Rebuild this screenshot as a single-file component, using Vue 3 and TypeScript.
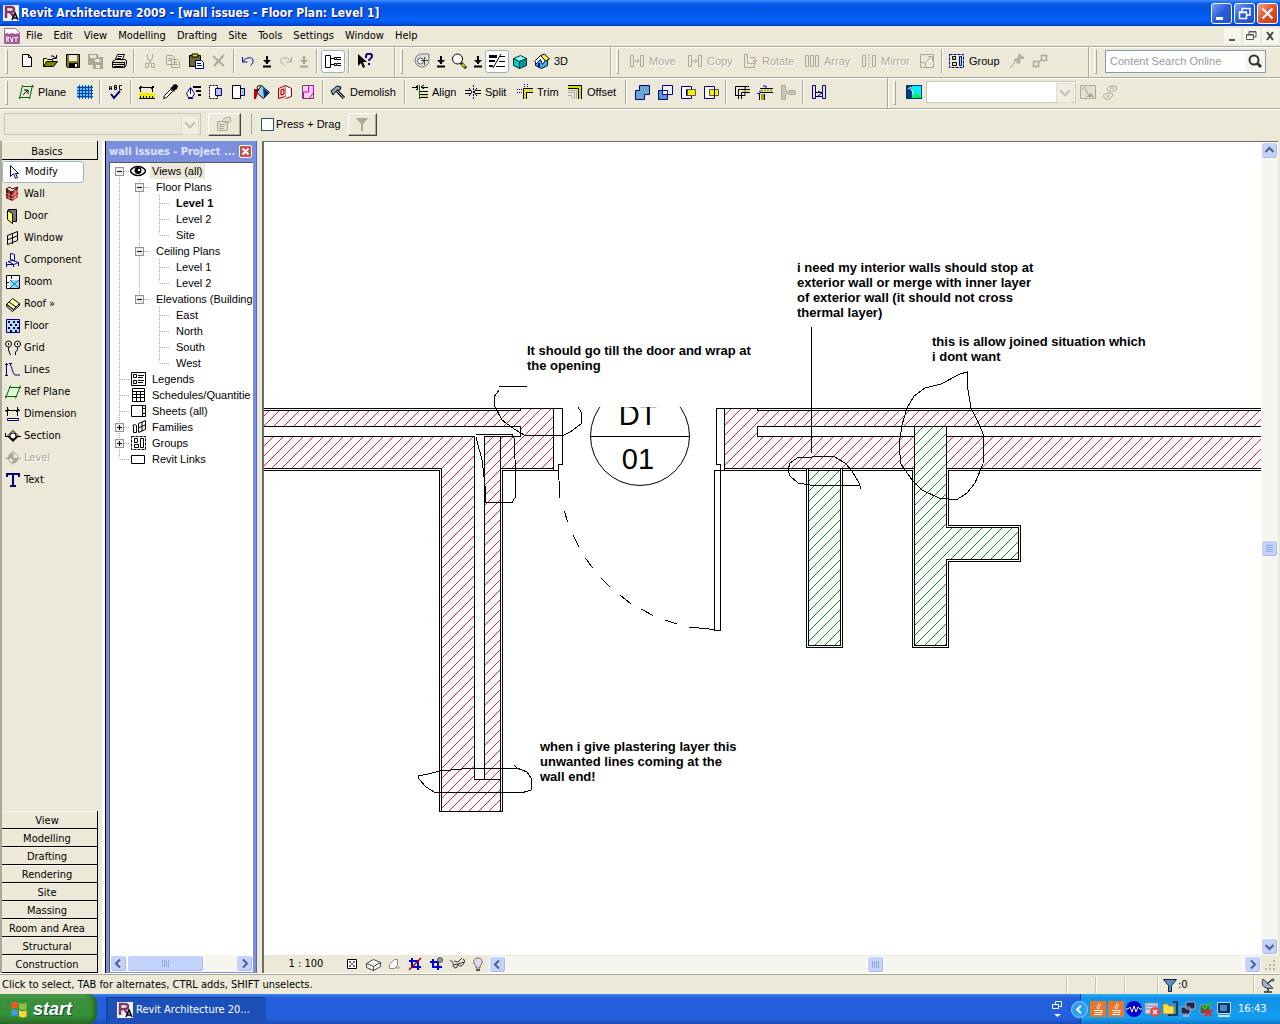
<script setup lang="ts">
interface Tool {
  icon?: string
  label?: string
  name?: string
  w?: number
  off?: boolean
  on?: boolean
  sep?: boolean
}
interface TreeRow {
  text: string
  cells: string[]
  icon?: string
  bold?: boolean
  picked?: boolean
}

const K = 'stroke="#000" fill="none"'
const G = 'stroke="#aca899" fill="none"'
const N = 'stroke="#000080" fill="none"'

const icons: Record<string, string> = {
  fresh: '<path d="M3.5 1.5h6l3 3v9h-9zM9.5 1.5v3h3" stroke="#000" fill="#fff"/>',
  open: '<path d="M1.5 13.5v-8h3l1 1h5v2" stroke="#000" fill="#ffff80"/><path d="M1.5 13.5l3-5h11l-4 5z" stroke="#000" fill="#808000"/><path d="M9 3h2l3 2M14.500 2v3.500h-4" stroke="#000" fill="none"/>',
  save: '<path d="M1.500 1.500h13v13h-12l-1-1z" stroke="#000" fill="#808000"/><path d="M4 2h8v6H4z" fill="#ece9d8"/><path d="M4 10h9v5H4z" fill="#000"/><path d="M10 11h2v3h-2z" fill="#fff"/>',
  central: '<path d="M0 1h10v3h5v12H5v-4H0z" fill="#aca899"/><path d="M2 2h6v3H2zM7 6h6v3H7zM8 12h4v3H8z" fill="#ece9d8"/><path d="M12 5v4M3 8l3 3M13 11l2 3" stroke="#aca899"/>',
  print: '<path d="M4.500 6.500l2-5h7l-2 5M7 3.500h4M6 5.500h4" stroke="#000" fill="#fff"/><path d="M1.500 8.500l3-2h9l2 1v4l-2 3h-12z" stroke="#000" fill="#e0ddc8"/><path d="M2 9.500h11M2 11.500h11M3 13.500h9M13.500 9v5" stroke="#000"/><path d="M8 10h3v1H8z" fill="#cc0"/>',
  cut: '<path d="M5.500 1v4l4 6M10.500 1v4l-4 6" stroke="#aca899" fill="none"/><path d="M3.500 10.500h3v4h-3zM9.500 10.500h3v4h-3z" stroke="#aca899" fill="none"/>',
  copy: '<path d="M1.500 2.500h6l2 2v7h-8zM6.500 6.500h6l2 2v6h-8zM3 5.500h4M3 7.500h3M8 9.500h4M8 11.500h5" stroke="#aca899" fill="none"/>',
  paste: '<path d="M1.500 2.500h11v11h-11z" stroke="#000" fill="#6b6b2e"/><path d="M4 1h6v3H4z" fill="#cc3" stroke="#000"/><path d="M7.500 7.500h6l2 2v6h-8z" stroke="#000080" fill="#fff"/><path d="M9 10.500h4M9 12.500h5" stroke="#000080"/>',
  del: '<path d="M2 3l11 10M13 2L3 13" stroke="#aca899" stroke-width="2"/>',
  undo: '<path d="M2.500 4v5h5M3 8.500c3-5 11-5 10 0c0 2-2 3-2 4" stroke="#0000a0" fill="none"/>',
  redo: '<path d="M13.500 4v5h-5M13 8.500c-3-5-11-5-10 0c0 2 2 3 3 3" stroke="#aca899" fill="none"/>',
  down: '<path d="M8 3v8M4 13.500h8" stroke="#000" stroke-width="2"/><path d="M4 7h8l-4 4z"/>',
  downoff: '<path d="M8 3v8M4 13.500h8" stroke="#aca899" stroke-width="2"/><path d="M4 7h8l-4 4z" fill="#aca899"/>',
  browser: `<path d="M.500 2.500h5v12h-5zM6 5.500h3M6 11.500h3M9.500 4.500h2v2h-2zM9.500 10.500h2v2h-2zM12 4.500h4M12 6.500h4M12 10.500h4M12 12.500h4" ${K}/>`,
  help: '<path d="M1 1v12l3-3 2 5 2-1-2-5h4z"/><path d="M9 5V3c0-3 6-3 6 0c0 3-3 2-3 5M12 10v2" stroke="#000080" stroke-width="2" fill="none"/>',
  wheel: '<path d="M8 1h7v7a7 6.500 0 1 1-7-7z" fill="#ddd" stroke="#777"/><circle cx="6.500" cy="8" r="3" fill="#fff" stroke="#555"/><path d="M10.500 4v8M7 7.500h7" stroke="#444"/>',
  lens: '<circle cx="6.500" cy="6" r="5" fill="#fff" stroke="#000"/><path d="M10 10l5 5" stroke="#000" stroke-width="3"/><path d="M11 11l3 3" stroke="#cc0" stroke-width="2"/>',
  thin: '<path d="M0 2h8v3H0zM0 7h6v2H0zM0 12h4v2H0z"/><path d="M4 15L12 1" stroke="#000"/><path d="M11 3.500h5M10 8.500h6M7 13.500h9" stroke="#000"/>',
  cube: '<path d="M1.500 5.500l6 3v7l-6-3z" fill="#0cc" stroke="#033"/><path d="M7.500 8.500l7-3v7l-7 3z" fill="#099" stroke="#033"/><path d="M1.500 5.500l7-3 6 3-7 3z" fill="#8ff" stroke="#033"/>',
  house: '<path d="M1.500 8v4.500l6 3 6-3V7l-5-5z" fill="#3bd" stroke="#003"/><path d="M.500 8.500L6.500 2.500l5 5-3 4-2-5-4 4z" fill="#fff" stroke="#003"/><path d="M6.500 2.500l4-1.500 5 5-4 2z" fill="#fe3" stroke="#003"/><path d="M4 10h2v4H4z" fill="#00a"/>',
  move: `<path d="M1.500 2.500h3v11h-3zM11.500 2.500h3v11h-3zM5 8h5M8 6l2 2-2 2" ${G}/>`,
  rotate: `<path d="M2.500 1.500h3v9h7v4h-10zM8 4.500h5v5M11 7l2 3 2-3" ${G}/>`,
  array: `<path d="M1.500 2.500h3v11h-3zM6.500 2.500h3v11h-3zM11.500 2.500h3v11h-3z" ${G}/>`,
  mirror: `<path d="M1.500 2.500h3v11h-3zM11.500 2.500h3v11h-3z" ${G}/><path d="M8 1v14" stroke="#aca899" stroke-dasharray="2 1"/>`,
  resize: `<path d="M1.500 1.500h13v13h-13zM1.500 9.500h5v5M7 9l6-6M9 3.500h4.500V8" ${G}/>`,
  group: `<path d="M.500 1.500h14v13H.500z" ${N} stroke-dasharray="3 1"/><path d="M3.500 3.500h3v3h-3z" fill="#8f8" stroke="#000"/><path d="M3.500 9.500h4v3h-4z" fill="#ff6" stroke="#000"/><path d="M10.500 3.500h2v9h-2z" fill="#6ff" stroke="#008"/>`,
  pin: '<path d="M1 15l5-6M10 1l5 4-4 1-1 5-5-4 4-2z" stroke="#aca899" fill="#b9b6a8"/>',
  link: `<path d="M9.500 2.500h5v5h-5zM1.500 8.500h5v5h-5zM7 9l3-3" ${G} stroke-width="1.500"/>`,
  search: '<circle cx="7" cy="7" r="4.500" fill="none" stroke="#333" stroke-width="2"/><path d="M10 10l4 4" stroke="#333" stroke-width="3"/>',
  plane: '<path d="M5 2.500h11M1 13.500h11M4.500 1L1.500 15M14.500 1L11.500 15" stroke="#060"/><path d="M5 11l5-5M6 6h4v4" stroke="#000" fill="none"/>',
  grid: '<path d="M0 2h15v12H0z" fill="#6bb8ff"/><path d="M2.500 1v14M5.500 1v14M8.500 1v14M11.500 1v14M14.500 1v14M0 3.500h16M0 6.500h16M0 9.500h16M0 12.500h16" stroke="#0048a0"/>',
  spell: `<path d="M1.500 6V3l1-1 1 1v3M1 4.500h3M6.500 1.500h2v4h-2zM6 3.500h3M14 1.500h-2.500v4H14" ${K}/><path d="M3 10l3 4 6-7" stroke="#000080" stroke-width="2" fill="none"/>`,
  measure: '<path d="M1.500 2v6M13.500 2v6M0 3.500h15M0 5l3-3M12 5l3-3" stroke="#000"/><path d="M0 9h16v6H0z" fill="#ee0"/><path d="M1.500 12v2M4.500 12v2M7.500 12v2M10.500 12v2M13.500 12v2M0 14.500h16" stroke="#000"/>',
  dropper: '<path d="M1.500 14.500l1-3 6-6 2 2-6 6z" fill="#fff" stroke="#000"/><path d="M8 4l4 4 1-2 2-1 1-3-2-2-3 1-1 2z"/>',
  brush: '<path d="M1.500 9.500l4-6 4 6-2 4h-4z" fill="#fff" stroke="#000080"/><path d="M5.500 4v6M3 14.500h5" stroke="#000080"/><path d="M8 3h8M11 7h5M13 11h3" stroke="#000" stroke-width="2"/>',
  joinA: '<path d="M1.500 1.500h8v13h-8z" stroke="#000" fill="#fff" stroke-dasharray="2 1"/><path d="M7.500 4.500h6v7h-6z" stroke="#000080" fill="#b8c4e8"/>',
  joinB: '<path d="M7.500 4.500h6v7h-6z" stroke="#000080" fill="#b8c4e8"/><path d="M1.500 1.500h8v13h-8z" stroke="#000" fill="#fff"/>',
  bucket: '<path d="M7.500 1.500l8 7-6 6-7-6z" fill="#9cf" stroke="#000"/><path d="M9 4l6 5-5 5z" fill="#036"/><path d="M0 5h4v3l-2 7H0z" fill="#b00"/><path d="M7 2c-4-2-5 3-2 5" stroke="#000" fill="none"/>',
  face: '<path d="M1.500 4.500l7-3v11l-7 2z" fill="#fcc" stroke="#900"/><path d="M8.500 1.500l6 3v8l-6 2" fill="#fff" stroke="#900"/><path d="M4 6l3-1v5l-3 1z" fill="none" stroke="#900"/>',
  splitf: '<path d="M2.500 1.500h11v13h-11z" fill="#fce" stroke="#555"/><path d="M8.500 1v7h-5v7M13.500 1v14" stroke="#c0c" fill="none"/><path d="M9 15l5-7" stroke="#555"/>',
  hammer: '<path d="M1 7l6-5 4 1-1 3h-3l-4 5z" fill="#8ac" stroke="#000"/><path d="M7 7l7 7" stroke="#000" stroke-width="3"/><path d="M7 7l7 7" stroke="#ccc"/>',
  align: '<path d="M0 3.500h6M10 3.500h6M5.500 1v5M4 2l2 2-2 2M12 1l-3 2 3 2" stroke="#000" fill="none"/><path d="M7.500 1v14" stroke="#060"/><path d="M8 7.500h8M8 10.500h8M8 13.500h8" stroke="#000"/><path d="M9 12h7" stroke="#cc0"/>',
  split: '<path d="M0 6.500h6M10 6.500h6M0 9.500h6M10 9.500h6M4 4l3 4-3 4M12 4L9 8l3 4" stroke="#000" fill="none"/><path d="M8.500 1v14" stroke="#00a" stroke-dasharray="2 1"/>',
  trim: '<path d="M0 5.500h6M7.500 0v4M10.500 0v4M0 8.500h5" stroke="#00a" stroke-dasharray="1 1"/><path d="M6.500 15V4.500H16M9.500 15V8.500H16" stroke="#000" fill="none"/><path d="M8 15V6.500h8" stroke="#dd0" stroke-width="2" fill="none"/>',
  offset: '<path d="M1 1.500h13.500V15" stroke="#000" fill="none"/><path d="M1 3h12v12" stroke="#dd0" stroke-width="2" fill="none"/><path d="M1 4.500h10.500V15" stroke="#000" fill="none"/><path d="M1 8.500h6.500V15M1 11.500h4V15M1 6.500h8.500V15" stroke="#aaa" fill="none"/>',
  boolA: '<path d="M5.500 1.500h10v9h-5v5h-9v-9h4z" fill="#6aa7d0" stroke="#000080"/>',
  boolB: '<path d="M1.500 6.500h9v9h-9z" fill="#5599cc" stroke="#000080"/><path d="M5.500 1.500h10v9h-10z" fill="#eef" stroke="#000080"/><path d="M5.500 6.500h5v4h-5z" fill="#fff" stroke="#000080"/>',
  boolC: '<path d="M1.500 2.500h10v3h-5v6h5v3h-10z" fill="#fff" stroke="#000080"/><path d="M7.500 5.500h8v6h-8z" fill="#fe0" stroke="#555"/>',
  boolD: '<path d="M1.500 2.500h10v12h-10z" fill="#fff" stroke="#000080"/><path d="M6.500 5.500h9v6h-9z" fill="#fe0" stroke="#555"/><path d="M11.500 5v7" stroke="#000080"/>',
  wallj: `<path d="M1.500 12V2.500H15M4.500 15V5.500H16M7.500 15V8.500H16M1.500 11.500H11V2" ${K}/><path d="M8 7h6" stroke="#cc0"/>`,
  beam: '<path d="M3 4.500h13M3 8.500h13M2.500 10v6M7.500 10v6" stroke="#000"/><path d="M4 6.500h12" stroke="#aa0" stroke-width="2" stroke-dasharray="2 1"/><path d="M0 9.500h3v-3M6 2h3v3" stroke="#00c" fill="none"/><path d="M4 10h3v6H4z" fill="#aa0"/>',
  joinoff: '<path d="M1.500 1.500h4v4l3 3-3 3v4h-4zM9 6.500h6v4H9z" fill="#c9c6b6" stroke="#aca899"/>',
  opening: `<path d="M1.500 1.500h3v13h-3zM11.500 1.500h3v13h-3zM5 8.500h6M5 12.500h6M7 7l4 2-4 3" ${N}/>`,
  option: '<path d="M0 1h16v14H0z" fill="#003a80"/><path d="M6 2h9v12H6z" fill="#0ef"/><path d="M2 5l3-2v3l3 2-2 2" stroke="#fff" fill="none"/><path d="M6 14l4-5 3 2 2 3z" fill="#0e3"/>',
  optoff: '<path d="M.500 1.500h15v13H.500z" fill="#e3e0cf" stroke="#aca899"/><path d="M6 13l4-4 2 1 2 3z" fill="#aca899"/><path d="M2 5l3-2v3l3 2-2 2" stroke="#aca899" fill="none"/>',
  hands: '<path d="M5 5l3-3h6l1 3-4 2H7zM1 12l3-3h5l2 2-3 4H3zM8 4h4M4 12h4" fill="none" stroke="#aca899"/>',
  props: '<path d="M1.500 5.500h10v9h-10zM3 8.500h6M3 10.500h5M3 12.500h5M6 5l3-3 5-1 1 4-4 2z" fill="#e3e0cf" stroke="#aca899"/>',
  funnel: '<path d="M2 2h12l-5 6v7H7V8z" fill="#aca899"/>',
  modify: '<path d="M4.500 1.500v11l3-3 2 5 2-1-2-4h3z" fill="#fff" stroke="#000080"/>',
  wall: '<path d="M1 3l6 3v9l-6-3z" fill="#700"/><path d="M7 6l6-5v10l-6 4z" fill="#b33"/><path d="M1 3l4-2 2 2 6-2-6 5z" fill="#fff" stroke="#300"/><path d="M1 7l6 3 6-5M1 10l6 3 6-4M4 5v8M10 4v9" stroke="#fff" fill="none" opacity=".5"/>',
  door: '<path d="M3.500 1.500h8v12h-4z" fill="#777" stroke="#000"/><path d="M2.500 2.500l5 3v10l-5-4z" fill="#ff6" stroke="#000"/>',
  window: `<path d="M2.500 5.500l10-4v9l-10 4zM7.500 3v11M2 10l10-4" ${K}/>`,
  component: '<path d="M5.500 1.500l4 1v6l-4-1zM3 9.500l5-1 5 2-4 2z" fill="#fff" stroke="#000080"/><path d="M1.500 10v5M8.500 12v3M13.500 10v4M1 12.500h8" stroke="#000080"/>',
  room: '<path d="M1.500 1.500h13v13h-13z" fill="#fff" stroke="#000"/><path d="M5 6h9v8H5z" fill="#9df"/><path d="M5 6l9 8M14 6l-9 8" stroke="#06a"/><path d="M6.500 1v4M1 8.500h3" stroke="#000"/>',
  roof: '<path d="M1.500 8.500l6-6 7 5-6 6z" fill="#ff9" stroke="#000"/><path d="M1.500 8.500v2l6 5 7-6V7M4 6l7 5M8 13.500l-6-5" stroke="#000" fill="none"/>',
  floor: '<path d="M1 1h14v14H1z" fill="#bdf"/><path d="M1.500 1.500h13v13h-13z" stroke="#008" fill="none"/><path d="M3 3h2v2H3zM8 3h2v2H8zM12 3h2v2h-2zM5 6h2v2H5zM10 6h2v2h-2zM3 9h2v2H3zM8 9h2v2H8zM12 9h2v2h-2zM5 12h2v2H5zM10 12h2v2h-2z" fill="#003"/>',
  gridline: `<circle cx="3.500" cy="4" r="3" ${K}/><circle cx="12.500" cy="4" r="3" ${K}/><path d="M3.500 3v2M12.500 3v2M3.500 7v3l2 5M12.500 7v3l-2 2v3" ${K}/>`,
  lines: '<path d="M1.500 1v13M0 13.500h3M0 2.500h3M5 2c2 2 2 9 5 11h5M4 1.500h3" stroke="#000080" fill="none"/>',
  refplane: '<path d="M5 3.500h10l-4 9H1z" fill="#dfd"/><path d="M4 3.500h12M0 12.500h12M5.500 1.500l-5 13M15.500 1.500l-5 13" stroke="#060"/>',
  dimension: '<path d="M2.500 1v9M12.500 1v9M0 4.500h15M1 6l3-3M11 6l3-3" stroke="#000"/><path d="M2.500 12.500h11v2h-11z" fill="#fff" stroke="#000080"/>',
  section: '<path d="M0 8.500h3M13 8.500h3M.500 5v3M2 8.500l6-6 6 6z" stroke="#000" fill="none"/><path d="M3 9l5 5 5-5z" fill="#000"/><circle cx="8" cy="8" r="3" fill="#fff" stroke="#000"/>',
  level: '<path d="M0 8.500h16M8 1v14" stroke="#aca899"/><path d="M8 3a5 5 0 0 0-5 5h5zM8 13a5 5 0 0 0 5-5H8z" fill="#aca899"/><circle cx="8" cy="8" r="5" fill="none" stroke="#aca899"/>',
  text: '<path d="M2 5V2h12v3M8 2v12M5 14h6" stroke="#000080" stroke-width="2" fill="none"/>',
  eye: '<path d="M0 8c4-6 12-6 16 0c-4 6-12 6-16 0z" fill="#fff" stroke="#000" stroke-width="1.500"/><circle cx="8" cy="7.500" r="3.500"/><path d="M8 6h2v2H8z" fill="#fff"/>',
  legends: `<path d="M1.500 1.500h14v13h-14zM3.500 3.500h3v3h-3zM3.500 9.500h3v3h-3zM8 4.500h6M8 6.500h5M8 9.500h6M8 11.500h5" ${K}/>`,
  sched: `<path d="M2.500 1.500h12v13h-12zM2.500 4.500h12M2.500 7.500h12M2.500 10.500h12M6.500 4.500v10M10.500 4.500v10" ${K}/>`,
  sheets: `<path d="M1.500 2.500h14v11h-14zM12.500 2.500v11M13 5.500h3M13 10.500h3" ${K}/>`,
  families: `<path d="M2.500 6.500l2-1 2 1v7h-3v-7M8.500 4.500l7-3v9l-7 3zM12 3v9M8 9l7-3" ${K}/>`,
  groups: `<path d="M1.500 1.500h14v13h-14z" ${K} stroke-dasharray="3 1"/><path d="M4.500 3.500h3v4h-3zM4.500 9.500h4v3h-4zM10.500 3.500h3v9h-3z" ${K}/>`,
  links: `<path d="M1.500 4.500h13v8h-13z" ${K}/>`,
  detail: '<path d="M3.500 3.500h9v9h-9z" fill="#fff" stroke="#000"/><path d="M5 5h2v2H5zM9 5h2v2H9zM7 7h2v2H7zM5 9h2v2H5zM9 9h2v2H9z" fill="#777"/>',
  model: '<path d="M1.500 7.500l7-4 7 3v4l-7 4-7-3zM1.500 7.500l7 3 7-4M8.500 10.500v4" fill="#fff" stroke="#444"/>',
  shadow: '<path d="M3.500 12.500v-4l5-5h3v6l-3 3z" fill="#fff" stroke="#888"/><path d="M4 13h9l2-2-3-1-3 3z" fill="#bbb"/>',
  crop: '<path d="M5 2v9h9M2 5h9v9" stroke="#0000e0" stroke-width="2" fill="none"/><path d="M2 14L14 2" stroke="#a00" stroke-width="1.500"/>',
  cropshow: '<path d="M5 3v8h9M2 6h8v8" stroke="#0000e0" stroke-width="2" fill="none"/><circle cx="12" cy="4" r="2.500" fill="#999" stroke="#555"/>',
  glasses: '<path d="M1 5c2-2 3 4 4 4M14 3c2 0 2 4 0 5M5 5l4 1 4-4" stroke="#333" fill="none"/><path d="M4 9c0 4 5 4 5-1zM9 8c1 3 5 3 6-2z" fill="#ddd" stroke="#333"/>',
  bulb: '<path d="M6 10c-4-4-2-8 2-8s6 4 2 8v2H6z" fill="#dde" stroke="#666"/><path d="M6 13h4v2H6z" fill="#555"/>',
  revit: '<path d="M0 0h16v16H0z" fill="#f4f2f4"/><path d="M3 13V2h5c4 0 4 5 0 5H4M7 7l4 5" stroke="#85336b" stroke-width="2.500" fill="none"/><path d="M9 15l3-7 3 7M10 13h4" stroke="#000" stroke-width="1.500" fill="none"/>',
  rvt: '<path d="M.500.500h11l4 4v11H.500z" fill="#fff" stroke="#a56b9c"/><path d="M1 6l2-1 2 1 3-1 3 1 4-1v10H1z" fill="#a4569a"/><path d="M2.500 14V9h2v2h-1l1 3M6 9l2 5 1-5M10 9.500h4M12 9v5" stroke="#fff" fill="none"/>',
  flag: '<path d="M2 3c2-1 4-1 5 0v5c-1-1-3-1-5 0z" fill="#f1592a"/><path d="M8 3c2 1 4 1 6 0v5c-2 1-4 1-6 0z" fill="#8cc63e"/><path d="M2 9c2-1 4-1 5 0v5c-1-1-3-1-5 0z" fill="#3c9bf0"/><path d="M8 9c2 1 4 1 6 0v5c-2 1-4 1-6 0z" fill="#ffd53c"/>',
  java: '<path d="M0 0h16v16H0z" fill="#e8762c"/><path d="M8 2c3 2-3 3 0 6M10 3c2 1-2 3-1 5M4 9.500h8v2H5M4 13.500h8" stroke="#fff" fill="none"/>',
  wave: '<circle cx="8" cy="8" r="8" fill="#00c"/><path d="M0 8h2l2-2 2 5 2-6 2 6 2-5 2 2h2" stroke="#fff" fill="none"/>',
  netx: '<path d="M1 2h13v11H1z" fill="#cfd8ea" stroke="#78a"/><path d="M2 5h11M2 8h11" stroke="#78a"/><circle cx="11" cy="11" r="5" fill="#e44"/><path d="M9 9l4 4M13 9l-4 4" stroke="#fff" stroke-width="1.500"/>',
  folder: '<path d="M1 3h5l1 2h5v8H1z" fill="#ffdf50" stroke="#a80"/><path d="M11 1h4v13h-4M6 14h6" stroke="#222" stroke-width="1.500" fill="none"/>',
  net: '<path d="M6 1h9v7H6zM1 6h9v7H1z" fill="#224" stroke="#aac"/><path d="M3 15h6" stroke="#aac" stroke-width="2"/>',
  usb: '<path d="M2 4h10v9H2z" fill="#555" stroke="#999"/><path d="M4 5l3 3 6-7" stroke="#1c1" stroke-width="2" fill="none"/><path d="M7 9l7 6M14 9l-7 6" stroke="#e22" stroke-width="2"/>',
  chip: '<path d="M1.500 1.500h13v11h-13z" fill="#135" stroke="#adf"/><path d="M4 4h7v6H4z" fill="#48c"/><path d="M2 15h12" stroke="#dde" stroke-width="2"/>',
  bluefunnel: '<path d="M1.500 2.500h13l-5 6v6h-3v-6z" fill="#5b8cc8" stroke="#123"/>',
  dish: '<path d="M3 2c-3 7 3 11 10 9z" fill="#9bc" stroke="#334"/><path d="M7 7l6-5M4 15h8M8 11v4" stroke="#334" stroke-width="1.500"/><circle cx="13" cy="3" r="1.500" fill="#567"/>',
}

const S: Tool = { sep: true }
const menus = ['File', 'Edit', 'View', 'Modelling', 'Drafting', 'Site', 'Tools', 'Settings', 'Window', 'Help']

const fileBand: Tool[] = [
  { icon: 'fresh', name: 'New' }, { icon: 'open', name: 'Open' }, { icon: 'save', name: 'Save' },
  { icon: 'central', name: 'Save to Central', off: true }, { icon: 'print', name: 'Print' }, S,
  { icon: 'cut', name: 'Cut', off: true }, { icon: 'copy', name: 'Copy', off: true },
  { icon: 'paste', name: 'Paste' }, { icon: 'del', name: 'Delete', off: true }, S,
  { icon: 'undo', name: 'Undo', w: 19 }, { icon: 'down', name: 'Undo list', w: 19 },
  { icon: 'redo', name: 'Redo', off: true, w: 19 }, { icon: 'downoff', name: 'Redo list', off: true, w: 18 }, S,
  { icon: 'browser', name: 'Project Browser', on: true, w: 24 }, S, { icon: 'help', name: "What's This" },
]
const viewBand: Tool[] = [
  { icon: 'wheel', name: 'SteeringWheels' }, { icon: 'down', name: 'Wheel list', w: 15 },
  { icon: 'lens', name: 'Zoom', w: 22 }, { icon: 'down', name: 'Zoom list', w: 15 },
  { icon: 'thin', name: 'Thin Lines', on: true, w: 24 }, { icon: 'cube', name: 'Model view', w: 22 },
  { icon: 'house', label: '3D', w: 40 },
]
const editBand: Tool[] = [
  { icon: 'move', label: 'Move', off: true, w: 58 }, { icon: 'move', label: 'Copy', off: true, w: 55 },
  { icon: 'rotate', label: 'Rotate', off: true, w: 62 }, { icon: 'array', label: 'Array', off: true, w: 57 },
  { icon: 'mirror', label: 'Mirror', off: true, w: 57 }, { icon: 'resize', name: 'Resize', off: true }, S,
  { icon: 'group', label: 'Group', w: 59 }, { icon: 'pin', name: 'Pin', off: true }, { icon: 'link', name: 'Link', off: true },
]
const toolsBand: Tool[] = [
  { icon: 'plane', label: 'Plane', w: 58 }, { icon: 'grid', name: 'Work plane grid' }, S,
  { icon: 'spell', name: 'Spelling' }, S,
  { icon: 'measure', name: 'Tape Measure' }, { icon: 'dropper', name: 'Match' }, { icon: 'brush', name: 'Linework' },
  { icon: 'joinA', name: 'Show Hidden' }, { icon: 'joinB', name: 'Remove Hidden' }, { icon: 'bucket', name: 'Paint' },
  { icon: 'face', name: 'Split Face' }, { icon: 'splitf', name: 'Edit Profile' }, S,
  { icon: 'hammer', label: 'Demolish', w: 74 }, S,
  { icon: 'align', label: 'Align', w: 53 }, { icon: 'split', label: 'Split', w: 52 },
  { icon: 'trim', label: 'Trim', w: 50 }, { icon: 'offset', label: 'Offset', w: 58 }, S,
  { icon: 'boolA', name: 'Join' }, { icon: 'boolB', name: 'Unjoin' }, { icon: 'boolC', name: 'Cut geometry' }, { icon: 'boolD', name: 'Uncut geometry' }, S,
  { icon: 'wallj', name: 'Wall Joins' }, { icon: 'beam', name: 'Beam Joins' }, { icon: 'joinoff', name: 'Join roof', off: true }, S,
  { icon: 'opening', name: 'Opening' },
]
const basics: Tool[] = [
  { icon: 'modify', label: 'Modify', on: true }, { icon: 'wall', label: 'Wall' }, { icon: 'door', label: 'Door' },
  { icon: 'window', label: 'Window' }, { icon: 'component', label: 'Component' }, { icon: 'room', label: 'Room' },
  { icon: 'roof', label: 'Roof »' }, { icon: 'floor', label: 'Floor' }, { icon: 'gridline', label: 'Grid' },
  { icon: 'lines', label: 'Lines' }, { icon: 'refplane', label: 'Ref Plane' }, { icon: 'dimension', label: 'Dimension' },
  { icon: 'section', label: 'Section' }, { icon: 'level', label: 'Level', off: true }, { icon: 'text', label: 'Text' },
]
const tabs = ['View', 'Modelling', 'Drafting', 'Rendering', 'Site', 'Massing', 'Room and Area', 'Structural', 'Construction']

const guides: Record<string, string> = {
  bar: 'M9.500 0v16',
  tee: 'M9.500 0v16M10 8.500h10',
  end: 'M9.500 0v8M10 8.500h10',
  top: 'M9.500 8v8M10 8.500h10',
  none: '',
}
const tree: TreeRow[] = [
  { text: 'Views (all)', cells: ['top-'], icon: 'eye', picked: true },
  { text: 'Floor Plans', cells: ['bar', 'tee-'] },
  { text: 'Level 1', cells: ['bar', 'bar', 'tee'], bold: true },
  { text: 'Level 2', cells: ['bar', 'bar', 'tee'] },
  { text: 'Site', cells: ['bar', 'bar', 'end'] },
  { text: 'Ceiling Plans', cells: ['bar', 'tee-'] },
  { text: 'Level 1', cells: ['bar', 'bar', 'tee'] },
  { text: 'Level 2', cells: ['bar', 'bar', 'end'] },
  { text: 'Elevations (Building', cells: ['bar', 'end-'] },
  { text: 'East', cells: ['bar', 'none', 'tee'] },
  { text: 'North', cells: ['bar', 'none', 'tee'] },
  { text: 'South', cells: ['bar', 'none', 'tee'] },
  { text: 'West', cells: ['bar', 'none', 'end'] },
  { text: 'Legends', cells: ['tee'], icon: 'legends' },
  { text: 'Schedules/Quantitie', cells: ['tee'], icon: 'sched' },
  { text: 'Sheets (all)', cells: ['tee'], icon: 'sheets' },
  { text: 'Families', cells: ['tee+'], icon: 'families' },
  { text: 'Groups', cells: ['tee+'], icon: 'groups' },
  { text: 'Revit Links', cells: ['end'], icon: 'links' },
]
const guideOf = (c: string) => guides[c.replace(/[-+]/, '')]

const viewTools: Tool[] = [
  { icon: 'detail', name: 'Detail Level' }, { icon: 'model', name: 'Model Graphics' }, { icon: 'shadow', name: 'Shadows' },
  { icon: 'crop', name: 'Crop View' }, { icon: 'cropshow', name: 'Show Crop Region' },
  { icon: 'glasses', name: 'Temporary Hide' }, { icon: 'bulb', name: 'Reveal Hidden' },
]
const trayIcons = ['java', 'java', 'wave', 'netx', 'folder', 'net', 'usb', 'chip']

const notes = [
  { x: 797, y: 272, lines: ['i need my interior walls should stop at', 'exterior wall or merge with inner layer', 'of exterior wall (it should not cross', 'thermal layer)'] },
  { x: 527, y: 355, lines: ['It should go till the door and wrap at', 'the opening'] },
  { x: 932, y: 346, lines: ['this is allow joined situation which', 'i dont want'] },
  { x: 540, y: 751, lines: ['when i give plastering layer this', 'unwanted lines coming at the', 'wall end!'] },
]

// One 45° hatch line every ten pixels, long enough to cross the whole sheet.
const hatch = (from: number, to: number, top: number, bottom: number) => {
  const run = bottom - top
  let d = ''
  for (let x = from - run; x < to; x += 10) d += `M${x} ${bottom}L${x + run} ${top}`
  return d
}
const brickLines = hatch(260, 2600, 400, 820)
const blockLines = hatch(800, 1030, 420, 650)
</script>

<template>
  <div class="app">
    <header class="title">
      <svg class="ico" viewBox="0 0 16 16" v-html="icons.revit" />
      <h1>Revit Architecture 2009 - [wall issues - Floor Plan: Level 1]</h1>
      <button class="cap" aria-label="Minimize"><svg viewBox="0 0 19 19"><path d="M4 13h7v3H4z" fill="#fff" /></svg></button>
      <button class="cap" aria-label="Restore"><svg viewBox="0 0 19 19"><path d="M7 7V4.500h8V11h-3M4.500 8.500h7v6h-7zM4 8h8" stroke="#fff" stroke-width="1.500" fill="none" /></svg></button>
      <button class="cap close" aria-label="Close"><svg viewBox="0 0 19 19"><path d="M4.500 4.500l10 10M14.500 4.500l-10 10" stroke="#fff" stroke-width="2" /></svg></button>
    </header>

    <nav class="menu">
      <svg class="ico" viewBox="0 0 16 16" v-html="icons.rvt" />
      <button v-for="m in menus" :key="m">{{ m }}</button>
      <span class="grow" />
      <button class="mdi" aria-label="Minimize view"><svg viewBox="0 0 16 16"><path d="M5 11h6v2H5z" fill="#555" /></svg></button>
      <button class="mdi" aria-label="Restore view"><svg viewBox="0 0 16 16"><path d="M6 6V3.500h7V9h-2M3.500 6.500h7v5h-7zM3 7h8M6 4h7" stroke="#555" fill="none" /></svg></button>
      <button class="mdi" aria-label="Close view"><svg viewBox="0 0 16 16"><path d="M5 4l6 8M11 4l-6 8" stroke="#444" stroke-width="2" /></svg></button>
    </nav>

    <div class="bar">
      <div v-for="(band, i) in [fileBand, viewBand, editBand]" :key="i" class="band" :class="'band' + i">
        <span class="grip" />
        <template v-for="(t, j) in band" :key="j">
          <span v-if="t.sep" class="sep" />
          <button v-else class="tool" :class="{ on: t.on }" :disabled="t.off" :aria-label="t.label ?? t.name" :style="{ width: (t.w ?? 23) + 'px' }">
            <svg class="ico" viewBox="0 0 16 16" v-html="icons[t.icon!]" />
            <span v-if="t.label">{{ t.label }}</span>
          </button>
        </template>
      </div>
      <div class="band rest">
        <span class="grip" />
        <form class="search" @submit.prevent>
          <input type="text" placeholder="Content Search Online" aria-label="Content Search Online" />
          <button aria-label="Search"><svg class="ico" viewBox="0 0 16 16" v-html="icons.search" /></button>
        </form>
      </div>
    </div>

    <div class="bar">
      <div class="band band3">
        <span class="grip" />
        <template v-for="(t, j) in toolsBand" :key="j">
          <span v-if="t.sep" class="sep" />
          <button v-else class="tool" :disabled="t.off" :aria-label="t.label ?? t.name" :style="{ width: (t.w ?? 23) + 'px' }">
            <svg class="ico" viewBox="0 0 16 16" v-html="icons[t.icon!]" />
            <span v-if="t.label">{{ t.label }}</span>
          </button>
        </template>
      </div>
      <div class="band rest">
        <span class="grip" />
        <button class="tool" aria-label="Design Options"><svg class="ico" viewBox="0 0 16 16" v-html="icons.option" /></button>
        <span class="combo white"><select aria-label="Design option" disabled><option /></select></span>
        <button class="tool" disabled aria-label="Add to option set"><svg class="ico" viewBox="0 0 16 16" v-html="icons.optoff" /></button>
        <button class="tool" disabled aria-label="Pick to edit"><svg class="ico" viewBox="0 0 16 16" v-html="icons.hands" /></button>
      </div>
    </div>

    <div class="options">
      <span class="combo"><select aria-label="Type" disabled><option /></select></span>
      <button class="raised" disabled aria-label="Element Properties"><svg class="ico" viewBox="0 0 16 16" v-html="icons.props" /></button>
      <span class="vline" />
      <label><input type="checkbox" />Press + Drag</label>
      <button class="raised narrow" disabled aria-label="Filter"><svg class="ico" viewBox="0 0 16 16" v-html="icons.funnel" /></button>
    </div>

    <main class="work">
      <aside class="design">
        <button class="tab head">Basics</button>
        <button v-for="b in basics" :key="b.label" class="cmd" :class="{ on: b.on }" :disabled="b.off">
          <svg class="ico" viewBox="0 0 16 16" v-html="icons[b.icon!]" /><span>{{ b.label }}</span>
        </button>
        <span class="grow" />
        <div class="tabs"><button v-for="t in tabs" :key="t" class="tab">{{ t }}</button></div>
      </aside>

      <section class="project">
        <header>
          <h2>wall issues - Project ...</h2>
          <button aria-label="Close browser"><svg viewBox="0 0 11 11"><path d="M2.500 2.500l6 6M8.500 2.500l-6 6" stroke="#fff" stroke-width="2" /></svg></button>
        </header>
        <div class="tree">
          <ul>
            <li v-for="(r, i) in tree" :key="i">
              <svg v-for="(c, j) in r.cells" :key="j" class="cell" viewBox="0 0 20 16">
                <path :d="guideOf(c)" stroke="#aaa" stroke-dasharray="1 1" fill="none" />
                <template v-if="/[-+]/.test(c)">
                  <rect x="5.500" y="4.500" width="8" height="8" rx="1" fill="#f0efe6" stroke="#8a94a0" />
                  <path :d="c.includes('+') ? 'M7 8.500h5M9.500 6v5' : 'M7 8.500h5'" stroke="#000" />
                </template>
              </svg>
              <svg v-if="r.icon" class="ico" viewBox="0 0 16 16" v-html="icons[r.icon]" />
              <span :class="{ bold: r.bold, picked: r.picked }">{{ r.text }}</span>
            </li>
          </ul>
          <div class="hscroll">
            <button class="arrow" aria-label="Scroll left"><svg viewBox="0 0 15 15"><path d="M9 3.500l-4 4 4 4" /></svg></button>
            <span class="thumb wide"><i /><i /><i /><i /></span>
            <span class="grow" />
            <button class="arrow" aria-label="Scroll right"><svg viewBox="0 0 15 15"><path d="M6 3.500l4 4-4 4" /></svg></button>
          </div>
        </div>
      </section>

      <section class="view">
        <div class="canvas">
          <svg class="drawing">
            <defs>
              <clipPath id="brick">
                <path d="M264 410H520V408H553V468H500V811H441V468H264V436H474V779H484V436H520V426H264zM484 437h16v342h-16zM724 408H757V410H4000V426H757V436H4000V468H724z" />
              </clipPath>
              <clipPath id="block">
                <path d="M808 470h32v175h-32zM914 426h32v101h72v32h-72v86h-32z" />
              </clipPath>
              <clipPath id="tag"><rect x="580" y="407" width="120" height="90" /></clipPath>
            </defs>
            <g transform="translate(-264 -142)">
              <g clip-path="url(#brick)">
                <rect x="264" y="400" width="3800" height="420" fill="#fffafa" />
                <path :d="brickLines" fill="none" stroke="#d02850" />
              </g>
              <path fill="#fff" d="M475 437h9v342h-9z" />
              <g clip-path="url(#block)">
                <rect x="800" y="420" width="230" height="230" fill="#fafffa" />
                <path :d="blockLines" fill="none" stroke="#108030" />
              </g>
              <g class="ink">
                <path d="M264 408.500H562.500V464.500H558.500V470.500H502.500M264 410.500H520.500V408M264 426.500H520.500V436.500H484.500V779.500M264 436.500H474.500V779.500H500.500M264 468.500H441.500V811M264 470.500H439.500V811.500H502.500V470M500.500 436V811M500 468.500H553.500M553.500 408V470" />
                <path d="M4000 408.500H716.500V464.500H720.500V470M724.500 408V470M757.500 408V410.500H4000M4000 426.500H757.500V436.500H914M947 436.500H4000M724 468.500H914M947 468.500H4000M714 470.500H806M842 470.500H912.500V647.500H948.500V561.500H1020.500V525.500H948.500V470.500H4000M914.500 426V645.500H946.500V559.500H1018.500V527.500H946.500V426" />
                <path d="M806.500 468V647.500H842.500V468M808.500 468V645.500H840.500V468M808 470.500h33M714.500 470.500h6v160h-6z" />
                <path d="M558.500 471L560 498M564.500 511L567.500 522M573 535L579 547M585.500 558L592.500 568M601 578L610 587M620 595L631 604M641 609L653 615.500M665 620L677 624M689 627L714 629.500" />
                <path d="M527 386.500H499M499 390L494 397 495 407 502 420 514 429 525 435.500H563L570 432 581 424V412L578 407" />
                <path d="M476 434.500H512L514 438 515.500 470V497L512 502.500H485.500L485 485 482 460 476 437" />
                <path d="M811.500 327V453M861 489L859 483 852 471 845 463 834 456.500H813L811 457.500H798L790 463 788 470 790 476 798 483 813 485.500H860" />
                <path d="M967 379V372L960 374 941 384 925 388 914 396 907 408 902 425 899 445 901 464 912 480 922 490 940 498.500 957 499.500 967 493 975 483 983 464 984 436 979 424 971 408 968 390 967 372" />
                <path d="M514 765L517 768 527 772 531 778V790L523 792.500H435L426 787 419 779 418 776 428 774 440 771 462 769 470 768.500H517" />
              </g>
              <g clip-path="url(#tag)">
                <circle cx="640" cy="436" r="49.500" fill="none" stroke="#000" />
                <path class="ink" d="M590 436.500h100" />
                <text class="mark" x="638" y="425">DT</text>
                <text class="mark" x="638" y="469">01</text>
              </g>
              <g class="note">
                <template v-for="n in notes" :key="n.x">
                  <text v-for="(l, i) in n.lines" :key="i" :x="n.x" :y="n.y + i * 15">{{ l }}</text>
                </template>
              </g>
            </g>
          </svg>
          <div class="vscroll">
            <button class="arrow" aria-label="Scroll up"><svg viewBox="0 0 15 15"><path d="M3.500 9l4-4 4 4" /></svg></button>
            <span class="grow" />
            <span class="thumb tall"><i /><i /><i /><i /></span>
            <span class="grow" />
            <button class="arrow" aria-label="Scroll down"><svg viewBox="0 0 15 15"><path d="M3.500 6l4 4 4-4" /></svg></button>
          </div>
        </div>
        <div class="viewbar">
          <button class="scale">1 : 100</button>
          <button v-for="t in viewTools" :key="t.name" class="vt" :aria-label="t.name"><svg class="ico" viewBox="0 0 16 16" v-html="icons[t.icon!]" /></button>
          <div class="hscroll">
            <button class="arrow" aria-label="Pan left"><svg viewBox="0 0 15 15"><path d="M9 3.500l-4 4 4 4" /></svg></button>
            <span class="grow" />
            <span class="thumb"><i /><i /><i /><i /></span>
            <span class="grow" />
            <button class="arrow" aria-label="Pan right"><svg viewBox="0 0 15 15"><path d="M6 3.500l4 4-4 4" /></svg></button>
          </div>
          <svg class="size" viewBox="0 0 17 17"><path d="M12 4h2v2h-2zM8 8h2v2H8zM12 8h2v2h-2zM4 12h2v2H4zM8 12h2v2H8zM12 12h2v2h-2z" fill="#b8b4a2" /></svg>
        </div>
      </section>
    </main>

    <footer class="status">
      <span class="msg">Click to select, TAB for alternates, CTRL adds, SHIFT unselects.</span>
      <span class="pane" /><span class="pane" /><span class="pane p3" />
      <span class="pane filter"><svg class="ico" viewBox="0 0 16 16" v-html="icons.bluefunnel" />:0</span>
      <span class="pane last"><svg class="ico" viewBox="0 0 16 16" v-html="icons.dish" /></span>
    </footer>

    <div class="taskbar">
      <button class="start"><svg viewBox="0 0 16 16" v-html="icons.flag" />start</button>
      <button class="task"><svg class="ico" viewBox="0 0 16 16" v-html="icons.revit" />Revit Architecture 20...</button>
      <span class="grow" />
      <button class="lang" aria-label="Language bar">
        <svg viewBox="0 0 16 26"><path d="M6.500 8V5.500h6v5h-2M3.500 8.500h6v4h-6z" stroke="#fff" fill="none" /><path d="M5 18h7l-3.500 3z" fill="#fff" /></svg>
      </button>
      <div class="tray">
        <button class="chev" aria-label="Show hidden icons"><svg viewBox="0 0 16 16"><path d="M9.500 4l-4 4 4 4" stroke="#fff" stroke-width="2" fill="none" /></svg></button>
        <svg v-for="(t, i) in trayIcons" :key="i" class="ico" viewBox="0 0 16 16" v-html="icons[t]" />
        <time>16:43</time>
      </div>
    </div>
  </div>
</template>

<style>
html, body, #app { margin: 0; height: 100%; }
</style>

<style scoped>
.app {
  --ui: "DejaVu Sans Condensed", "DejaVu Sans", sans-serif;
  --sys: "Liberation Sans", sans-serif;
  display: flex; flex-direction: column; min-height: 100%; overflow: hidden;
  background: #ece9d8; color: #000; font: 11px/16px var(--ui);
}
.app * { box-sizing: border-box; }
button, input, select { font: inherit; color: inherit; margin: 0; padding: 0; border: 0; border-radius: 0; background: none; }
h1, h2, ul { margin: 0; padding: 0; font-weight: bold; list-style: none; }
.ico { width: 16px; height: 16px; flex: none; display: block; }
.grow { flex: 1; }

.title {
  display: flex; align-items: center; gap: 2px; height: 26px; padding: 0 2px 0 3px;
  background: linear-gradient(#3c8cff 0, #0a5ae8 4px, #0054e3 10px, #0261fc 20px, #0150dc 24px, #003ab8 26px);
}
.title h1 { flex: 1; font: bold 12px/20px var(--ui); color: #fff; text-shadow: 1px 1px #0f1089; white-space: nowrap; }
.cap { width: 21px; height: 21px; border: 1px solid #fff; border-radius: 3px; background: linear-gradient(135deg, #7a9ef0, #2a5bdc 50%, #2850c8); }
.cap svg { display: block; }
.cap.close { background: linear-gradient(135deg, #f0a088, #e0502c 50%, #c03a14); }

.menu { display: flex; align-items: center; gap: 1px; height: 20px; padding: 0 1px 0 4px; }
.menu button { padding: 0 5px; height: 18px; white-space: nowrap; }
.menu .mdi { width: 17px; height: 16px; padding: 0; margin-left: 1px; background: #f6f5ee; }
.mdi svg { display: block; width: 16px; height: 16px; }

.bar { display: flex; height: 31px; border-top: 1px solid #aca899; box-shadow: inset 0 1px #fff; }
.band { display: flex; align-items: center; flex: none; padding-bottom: 2px; border-right: 1px solid #aca899; box-shadow: 1px 0 #fff; font-family: var(--sys); }
.band0 { width: 395px; }
.band1 { width: 216px; }
.band2 { width: 478px; }
.band3 { width: 888px; }
.rest { flex: 1; border: 0; box-shadow: none; }
.grip { width: 3px; height: 25px; margin: 0 7px 0 5px; border: 1px solid; border-color: #fff #aca899 #aca899 #fff; flex: none; }
.sep { width: 8px; height: 24px; flex: none; background: linear-gradient(90deg, transparent 3px, #aca899 3px 4px, #fff 4px 5px, transparent 5px); }
.tool { display: flex; align-items: center; gap: 4px; padding: 0 3px; height: 23px; flex: none; white-space: nowrap; justify-content: center; }
.tool:has(span) { justify-content: flex-start; }
.tool:disabled { color: #aca899; text-shadow: 1px 1px #fff; }
.tool.on { background: #fff; border: 1px solid #98b5c8; border-radius: 3px; }
.search { display: flex; align-items: center; width: 161px; height: 23px; background: #fff; border: 1px solid #7f9db9; margin-left: 1px; }
.search input { flex: 1; min-width: 0; padding: 0 4px; outline: 0; }
.search input::placeholder { color: #999; opacity: 1; }
.search button { width: 20px; height: 18px; background: #f6f5ee; padding-left: 2px; }
.combo { position: relative; display: block; width: 197px; height: 22px; border: 1px solid #c9c7ba; padding: 1px; flex: none; }
.combo.white { width: 150px; margin: 0 1px; background: #fff; }
.combo select { appearance: none; width: 100%; height: 100%; display: block; opacity: 1; }
.combo::after { content: ""; position: absolute; right: 1px; top: 1px; width: 16px; height: 18px; border-radius: 2px; background: #f0eee2; border: 1px solid #e0ddcd; }
.combo::before { content: ""; position: absolute; z-index: 1; right: 6px; top: 5px; width: 6px; height: 6px; border: solid #c4c1b0; border-width: 0 2px 2px 0; transform: rotate(45deg); }

.options { display: flex; align-items: center; height: 33px; padding: 0 4px 2px; border-top: 1px solid #aca899; box-shadow: inset 0 1px #fff; font-family: var(--sys); }
.raised { width: 33px; height: 23px; margin-left: 7px; padding-left: 7px; border: 1px solid; border-color: #fff #444 #444 #fff; box-shadow: inset -1px -1px #aca899; }
.raised.narrow { width: 29px; margin-left: 7px; padding-left: 5px; }
.vline { width: 1px; height: 20px; margin: 0 9px 0 10px; background: #aca899; }
.options label { display: flex; align-items: center; gap: 2px; }
.options input { appearance: none; width: 13px; height: 13px; background: #fff; border: 1px solid #1c5180; }

.work { flex: 1; display: flex; min-height: 0; border-bottom: 1px solid #fff; }
.design { display: flex; flex-direction: column; flex: none; width: 98px; border-left: 2px solid #aca899; }
.tab { display: block; width: 100%; height: 18px; padding: 2px 5px 0 0; line-height: 15px; text-align: center; border: solid #000; border-width: 0 1px 1px 0; box-shadow: inset 0 1px #f8f6ec; }
.head { height: 19px; margin-bottom: 1px; flex: none; }
.cmd { display: flex; align-items: center; gap: 3px; height: 22px; width: 82px; padding: 0 3px; white-space: nowrap; flex: none; text-align: left; }
.cmd.on { background: #fff; border: 1px solid #98b5c8; border-radius: 3px; }
.cmd:disabled { color: #aca899; text-shadow: 1px 1px #fff; }

.project { display: flex; flex-direction: column; flex: none; width: 152px; margin-left: 7px; padding: 0 3px 1px 3px; background: #7b8fdc; border-left: 1px solid #000; border-right: 1px solid #4a64c8; box-shadow: -3px 0 #fff; }
.project header { display: flex; align-items: center; justify-content: space-between; height: 21px; }
.project h2 { font: bold 11px/16px var(--ui); color: #dde6ff; white-space: nowrap; }
.project header button { width: 13px; height: 13px; margin-right: 1px; background: #c75050; border: 1px solid #fff; border-radius: 2px; flex: none; }
.project header svg { display: block; }
.tree { flex: 1; display: flex; flex-direction: column; background: #fff; min-height: 0; overflow: hidden; border: solid #555; border-width: 1px 0 0 1px; font-family: var(--sys); }
.tree ul { flex: 1; overflow: hidden; font-weight: normal; }
.tree li { display: flex; align-items: center; height: 16px; white-space: nowrap; }
.cell { width: 20px; height: 16px; flex: none; shape-rendering: crispEdges; }
.tree li span { margin-left: 4px; padding-left: 2px; }
.tree .bold { font-weight: bold; }
.tree li .picked { background: #ece9d8; padding-right: 2px; }

.hscroll { display: flex; flex: 1; height: 17px; background: #f6f5f0; }
.tree .hscroll { flex: none; }
.vscroll { display: flex; flex-direction: column; width: 17px; flex: none; background: #f6f5f0; }
.arrow { width: 17px; height: 17px; padding: 0; flex: none; border: 1px solid #fff; border-radius: 3px; background: #c3d3fb; box-shadow: inset -1px -1px #a4b8ec; }
.arrow svg { display: block; }
.arrow path { fill: none; stroke: #4d6185; stroke-width: 2; }
.thumb { display: flex; align-items: center; justify-content: center; gap: 1px; width: 17px; height: 17px; flex: none; border: 1px solid #fff; border-radius: 3px; background: #c3d3fb; box-shadow: inset -1px -1px #a4b8ec; }
.thumb i { width: 1px; height: 7px; background: #8caae6; }
.thumb.wide { width: 77px; }
.thumb.tall { flex-direction: column; }
.tall i { width: 7px; height: 1px; }

.view { flex: 1; display: flex; flex-direction: column; min-width: 0; margin: 0 2px 0 5px; border-left: 2px solid #716f64; border-top: 1px solid #716f64; }
.canvas { flex: 1; display: flex; min-height: 0; background: #fff; }
.drawing { flex: 1; min-width: 0; height: auto; overflow: hidden; }
.ink { fill: none; stroke: #000; stroke-width: 1; shape-rendering: crispEdges; }
.mark { font: 29px var(--sys); text-anchor: middle; }
.note { font: bold 13px var(--sys); }
.viewbar { display: flex; align-items: center; height: 18px; flex: none; }
.scale { width: 80px; padding-left: 4px; }
.vt { width: 21px; height: 17px; flex: none; }
.viewbar .hscroll { margin-left: -2px; }
.size { width: 17px; height: 17px; flex: none; }

.status { display: flex; align-items: center; height: 20px; padding: 0 2px; border-top: 1px solid #aca899; }
.msg { flex: 1; white-space: nowrap; }
.pane { display: flex; align-items: center; width: 29px; height: 16px; border-left: 1px solid #c8c5b2; box-shadow: inset 1px 0 #fff; }
.p3 { width: 33px; }
.filter { width: 96px; padding-left: 4px; }
.last { width: 25px; padding-left: 6px; }

.taskbar { display: flex; height: 30px; flex: none; background: linear-gradient(#3a86f0 0, #245edb 4px, #2360e0 24px, #1b4bb8 30px); color: #fff; }
.start { display: flex; align-items: center; gap: 4px; width: 97px; padding-left: 9px; border-radius: 0 9px 9px 0; font: italic bold 18px/24px var(--sys); background: linear-gradient(#5fb55f 0, #3c8f3c 5px, #379237 20px, #2c6f2c 30px); text-shadow: 1px 1px 1px #143; box-shadow: inset -3px 0 4px #256025; }
.start svg { width: 20px; height: 20px; }
.task { display: flex; align-items: center; gap: 3px; width: 160px; height: 26px; margin: 3px 0 0 9px; padding-left: 11px; border-radius: 2px; background: #1d4fb8; box-shadow: inset 1px 1px 1px #143a90; white-space: nowrap; }
.lang { width: 16px; margin-right: 15px; }
.lang svg { width: 16px; height: 26px; display: block; }
.tray { display: flex; align-items: center; gap: 2px; width: 200px; background: linear-gradient(#2bb0f5 0, #1290e9 4px, #139ef0 24px, #0d76c8 30px); border-left: 1px solid #0b3a94; }
.chev { width: 17px; height: 17px; margin-left: -10px; border-radius: 9px; background: #2aa0f5; border: 1px solid #9cf; flex: none; }
.chev svg { display: block; }
.tray time { margin-left: 4px; }
</style>
